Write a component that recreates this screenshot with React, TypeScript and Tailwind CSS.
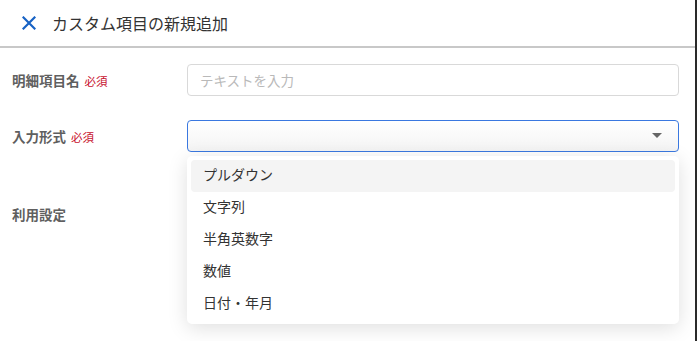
import React from "react";

const font = { fontFamily: '"Noto Sans CJK JP", "Noto Sans", sans-serif' };

export default function App() {
  const items = ["プルダウン", "文字列", "半角英数字", "数値", "日付・年月"];
  return (
    <div className="relative w-[697px] h-[341px] overflow-hidden bg-white text-[#333]" style={font}>
      <div className="absolute right-0 top-0 h-full w-[2px] bg-[#2a2a2a] z-30" />
      <div className="flex items-center h-[48px] border-b-2 border-[#c8c8c8] pl-[22px] pb-[1px]">
        <svg width="14" height="14" viewBox="0 0 14 14" className="mr-[16px]">
          <path d="M1.5 1.5 L12.5 12.5 M12.5 1.5 L1.5 12.5" stroke="#1762c4" strokeWidth="2.2" strokeLinecap="square" />
        </svg>
        <span className="text-[16px] text-[#333] leading-none">カスタム項目の新規追加</span>
      </div>
      <div className="relative">
        <div className="flex items-center pt-[16px] pr-[18px]">
          <div className="w-[187px] pl-[12px] flex items-baseline">
            <span className="text-[13.5px] font-bold text-[#5f5f5f]">明細項目名</span>
            <span className="ml-[5px] text-[11.5px] text-[#c8102e]">必須</span>
          </div>
          <div className="flex-1 h-[32px] border border-[#d9d9d9] rounded-[4px] flex items-center pl-[12px]">
            <span className="text-[13.5px] text-[#b9b9b9]">テキストを入力</span>
          </div>
        </div>
        <div className="flex items-center pt-[24px] pr-[18px]">
          <div className="w-[187px] pl-[12px] flex items-baseline">
            <span className="text-[13.5px] font-bold text-[#5f5f5f]">入力形式</span>
            <span className="ml-[5px] text-[11.5px] text-[#c8102e]">必須</span>
          </div>
          <div className="flex-1 h-[32px] border border-[#3a78e0] rounded-[4px] flex items-center justify-end pr-[16px] bg-gradient-to-b from-white to-[#f4f4f4]">
            <svg width="10" height="6" viewBox="0 0 10 6">
              <path d="M0 0 H10 L5 5 Z" fill="#666" />
            </svg>
          </div>
        </div>
        <div className="flex items-center pt-[49px]">
          <div className="pl-[12px]">
            <span className="text-[13.5px] font-bold text-[#5f5f5f]">利用設定</span>
          </div>
        </div>
        <div className="absolute left-[187px] top-[108px] w-[492px] bg-white rounded-[5px] shadow-[0_4px_20px_rgba(0,0,0,0.13)] p-[4px] z-20">
          {items.map((t, i) => (
            <div
              key={t}
              className={`h-[32px] flex items-center pl-[12px] pb-[3px] rounded-[4px] text-[14px] text-[#333] ${i === 0 ? "bg-[#f4f4f4]" : ""}`}
            >
              {t}
            </div>
          ))}
        </div>
      </div>
    </div>
  );
}
